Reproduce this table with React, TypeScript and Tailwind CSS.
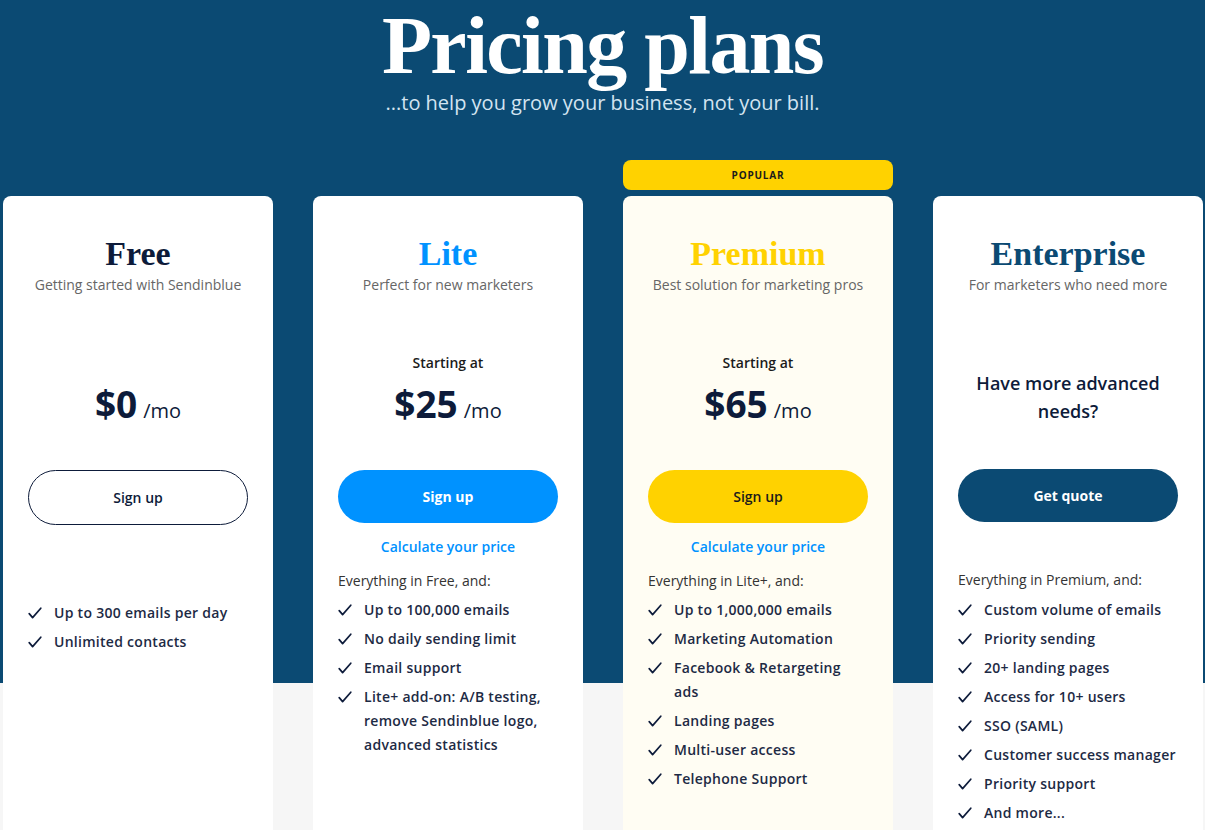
import { ReactNode } from "react";

type Plan = {
  name: string;
  tagline: string;
  titleColor: string;
  cardBg: string;
  popular?: boolean;
  priceBlock: ReactNode;
  button: ReactNode;
  calc?: boolean;
  intro?: string;
  features: string[];
  listClass: string;
};

const Check = () => (
  <svg
    width="14"
    height="12"
    viewBox="0 0 14 12"
    className="mt-[6px] shrink-0"
    fill="none"
    stroke="#0d1b3a"
    strokeWidth="1.7"
    strokeLinecap="round"
    strokeLinejoin="round"
  >
    <path d="M1.2 6.6 4.6 10.6 12.8 1.2" />
  </svg>
);

const Price = ({ amount, starting }: { amount: string; starting: boolean }) => (
  <div className="h-[175px] pt-[56px] flex flex-col items-center">
    <p
      className={`h-6 leading-6 text-[14px] font-semibold text-[#1b1b1b] ${
        starting ? "" : "invisible"
      }`}
    >
      Starting at
    </p>
    <p className="mt-[5px] leading-[48px] text-[#0d1b3a]">
      <span className="text-[37px] font-bold">{amount}</span>
      <span className="text-[20px] ml-[6px]">/mo</span>
    </p>
  </div>
);

const plans: Plan[] = [
  {
    name: "Free",
    tagline: "Getting started with Sendinblue",
    titleColor: "text-[#0d1b3a]",
    cardBg: "bg-white",
    priceBlock: <Price amount="$0" starting={false} />,
    button: (
      <button className="w-[220px] h-[55px] rounded-full border border-[#0d1b3a] text-[14px] font-semibold text-[#0d1b3a]">
        Sign up
      </button>
    ),
    features: ["Up to 300 emails per day", "Unlimited contacts"],
    listClass: "mt-[76px]",
  },
  {
    name: "Lite",
    tagline: "Perfect for new marketers",
    titleColor: "text-[#0092ff]",
    cardBg: "bg-white",
    priceBlock: <Price amount="$25" starting />,
    button: (
      <button className="w-[220px] h-[53px] rounded-full bg-[#0092ff] text-[14px] font-bold text-white">
        Sign up
      </button>
    ),
    calc: true,
    intro: "Everything in Free, and:",
    features: [
      "Up to 100,000 emails",
      "No daily sending limit",
      "Email support",
      "Lite+ add-on: A/B testing, remove Sendinblue logo, advanced statistics",
    ],
    listClass: "mt-[7px]",
  },
  {
    name: "Premium",
    tagline: "Best solution for marketing pros",
    titleColor: "text-[#ffd200]",
    cardBg: "bg-[#fffdf3]",
    popular: true,
    priceBlock: <Price amount="$65" starting />,
    button: (
      <button className="w-[220px] h-[53px] rounded-full bg-[#ffd200] text-[14px] font-semibold text-[#1b1b1b]">
        Sign up
      </button>
    ),
    calc: true,
    intro: "Everything in Lite+, and:",
    features: [
      "Up to 1,000,000 emails",
      "Marketing Automation",
      "Facebook & Retargeting ads",
      "Landing pages",
      "Multi-user access",
      "Telephone Support",
    ],
    listClass: "mt-[7px]",
  },
  {
    name: "Enterprise",
    tagline: "For marketers who need more",
    titleColor: "text-[#0b4a73]",
    cardBg: "bg-white",
    priceBlock: (
      <div className="h-[174px] pt-[74px] text-center text-[18px] leading-[28px] font-semibold text-[#0d1b3a]">
        Have more advanced
        <br />
        needs?
      </div>
    ),
    button: (
      <button className="w-[220px] h-[53px] rounded-full bg-[#0b4a73] text-[14px] font-bold text-white">
        Get quote
      </button>
    ),
    intro: "Everything in Premium, and:",
    features: [
      "Custom volume of emails",
      "Priority sending",
      "20+ landing pages",
      "Access for 10+ users",
      "SSO (SAML)",
      "Customer success manager",
      "Priority support",
      "And more...",
    ],
    listClass: "mt-[8px]",
  },
];

const Card = ({ plan }: { plan: Plan }) => (
  <div className="w-[270px] shrink-0 flex flex-col">
    <div className="h-[36px]">
      {plan.popular && (
        <div className="h-[30px] rounded-[8px] bg-[#ffd200] flex items-center justify-center text-[10px] font-bold tracking-[0.08em] text-[#1b1b1b] pt-[1px]">
          POPULAR
        </div>
      )}
    </div>
    <div className={`h-[700px] rounded-[8px] ${plan.cardBg} px-[25px]`}>
      <div className="pt-[38px] text-center">
        <h2
          className={`h-10 leading-10 text-[34px] font-bold ${plan.titleColor}`}
          style={{ fontFamily: '"Liberation Serif", "DejaVu Serif", serif' }}
        >
          {plan.name}
        </h2>
        <p className="mt-[1px] leading-5 text-[14px] text-[#666]">{plan.tagline}</p>
      </div>
      {plan.priceBlock}
      <div className="flex justify-center">{plan.button}</div>
      {plan.calc && (
        <p className="mt-[14px] text-center leading-5 text-[14px] font-semibold text-[#0092ff]">
          Calculate your price
        </p>
      )}
      {plan.intro && (
        <p
          className={`${plan.calc ? "mt-[14px]" : "mt-[48px]"} leading-5 text-[14px] text-[#333]`}
        >
          {plan.intro}
        </p>
      )}
      <ul className={`${plan.listClass} flex flex-col gap-[5px]`}>
        {plan.features.map((f, i) => (
          <li key={i} className="flex gap-[12px]">
            <Check />
            <span className="max-w-[192px] leading-6 text-[14px] font-semibold text-[#1d2a44] tracking-[0.02em]">
              {f}
            </span>
          </li>
        ))}
      </ul>
    </div>
  </div>
);

export default function App() {
  return (
    <div
      className="w-[1205px] h-[830px] overflow-hidden bg-[linear-gradient(to_bottom,#0b4a73_683px,#f6f6f6_683px)]"
      style={{ fontFamily: '"Open Sans", "Noto Sans", sans-serif' }}
    >
      <div className="pt-[5px] flex flex-col items-center">
        <h1
          className="h-[82px] leading-[82px] text-[82px] font-bold text-white tracking-[-0.02em]"
          style={{ fontFamily: '"Liberation Serif", "DejaVu Serif", serif' }}
        >
          Pricing plans
        </h1>
        <p className="mt-[4px] leading-6 text-[20px] text-[#d3e4f1]">
          ...to help you grow your business, not your bill.
        </p>
      </div>
      <div className="mt-[45px] pl-[3px] flex gap-[40px]">
        {plans.map((p) => (
          <Card key={p.name} plan={p} />
        ))}
      </div>
    </div>
  );
}
